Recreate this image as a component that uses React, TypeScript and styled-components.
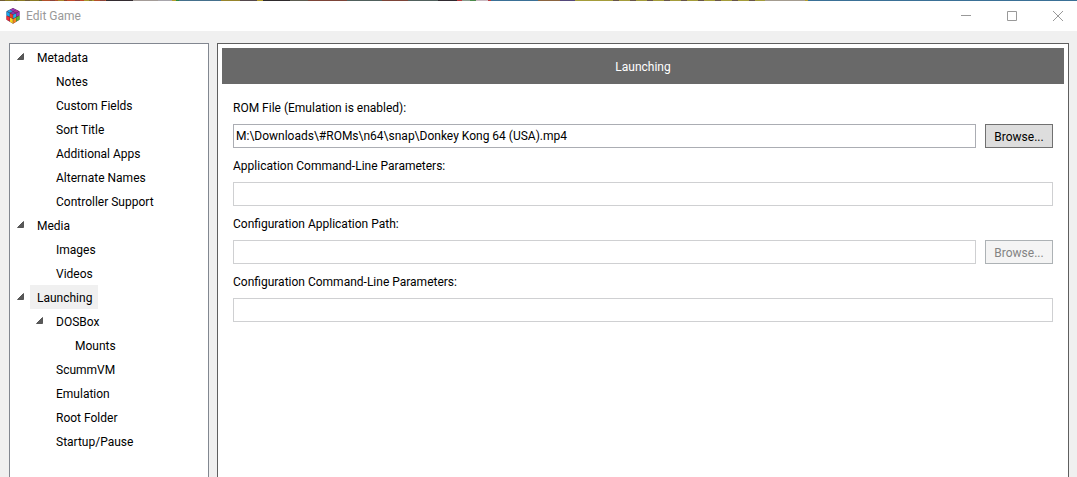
import React from "react";
import styled, { createGlobalStyle } from "styled-components";

const GlobalStyle = createGlobalStyle`
  *, *::before, *::after { box-sizing: border-box; }
  body {
    margin: 0;
    background: #f0f0f0;
    color: #000;
    font: 12px/16px "Segoe UI", Roboto, "Open Sans", sans-serif;
  }
`;

const Window = styled.div`
  display: flex;
  flex-direction: column;
  min-height: 100vh;
`;

const Backdrop = styled.div`
  height: 1px;
  background:
    repeating-linear-gradient(90deg, #4a305066 0 5px, transparent 5px 14px, #2e2a2c55 14px 17px, transparent 17px 25px) 0 0 / 106px 1px no-repeat,
    repeating-linear-gradient(90deg, #4a3050aa 0 6px, transparent 6px 17px) 613px 0 / 152px 1px no-repeat,
    linear-gradient(
      90deg,
      #8a7a24 0 42px, #b4502a 42px 58px, #a8862a 58px 64px, #c04a28 64px 84px,
      #a8962e 84px 94px, #b4502a 94px 106px,
      #332b30 106px 133px, #a49c98 133px 158px, #a8a6ac 158px 172px,
      #b49c2c 172px 176px, #2a8a3a 176px 179px, #45708c 179px 221px,
      #96842c 221px 240px, #54484c 240px 257px, #b49c2c 257px 263px,
      #2e2a2c 263px 290px, #5c5c50 290px 308px, #7c4438 308px 347px,
      #50605c 347px 382px, #7c4438 382px 408px, #50605c 408px 438px,
      #302a30 438px 457px, #b8383c 457px 462px, #8a9a8c 462px 470px,
      #4a8a4a 470px 476px, #c8b8c0 476px 488px, #b8383c 488px 491px,
      #3a7096 491px 538px, #8a6440 538px 560px, #54487a 560px 575px,
      #a49c3a 575px 765px, #a49c90 765px 805px, #b49c2c 805px 808px,
      #3a7096 808px
    );
`;

const TitleBar = styled.header`
  display: flex;
  align-items: center;
  height: 30px;
  padding: 0 1px 0 5px;
  background: #fff;
`;

const Title = styled.h1`
  flex: 1;
  margin: 0 0 0 5px;
  color: #999;
  font-size: 12px;
  font-weight: 400;
`;

const WindowControls = styled.div`
  display: flex;
  gap: 10px;
`;

const WindowButton = styled.button`
  display: flex;
  align-items: center;
  justify-content: center;
  width: 36px;
  height: 28px;
  padding: 0;
  border: 0;
  background: none;
  color: #999;
`;

const Body = styled.div`
  display: flex;
  flex: 1;
  gap: 8px;
  padding: 12px 8px 0 9px;
`;

const Sidebar = styled.nav`
  flex: 0 0 200px;
  padding: 1px 0;
  border: 1px solid #828790;
  border-bottom: 0;
  background: #fff;
`;

const TreeList = styled.ul<{ $nested?: boolean }>`
  margin: 0;
  padding: 0 0 0 ${(p) => (p.$nested ? 19 : 1)}px;
  list-style: none;
`;

const TreeRow = styled.div`
  display: flex;
  align-items: center;
  height: 24px;
`;

const Toggle = styled.button`
  display: flex;
  align-items: center;
  justify-content: center;
  width: 19px;
  height: 24px;
  padding: 0 0 2px;
  border: 0;
  background: none;
`;

const ToggleSpace = styled.span`
  width: 19px;
`;

const TreeLink = styled.a<{ $selected?: boolean }>`
  padding: 5px 6px 3px 7px;
  background: ${(p) => (p.$selected ? "#f0f0f0" : "transparent")};
  color: inherit;
  text-decoration: none;
`;

const Panel = styled.main`
  flex: 1;
  min-width: 0;
  padding: 4px;
  border: 1px solid #5f5f5f;
  border-bottom: 0;
  background: #fff;
`;

const PanelTitle = styled.h2`
  margin: 0;
  padding: 11px 10px 9px;
  background: #696969;
  color: #fff;
  font-size: 12px;
  font-weight: 400;
  text-align: center;
`;

const Form = styled.form`
  display: flex;
  flex-direction: column;
  gap: 10px;
  padding: 16px 11px;
`;

const Field = styled.div`
  display: flex;
  flex-direction: column;
  gap: 8px;
`;

const FieldRow = styled.div`
  display: flex;
  gap: 9px;
`;

const TextBox = styled.input`
  flex: 1;
  min-width: 0;
  height: 24px;
  padding: 0 2px;
  border: 1px solid #abadb3;
  background: #fff;
  color: #000;
  font: inherit;
  &:disabled { border-color: #cfd0d2; }
`;

const BrowseButton = styled.button`
  width: 68px;
  height: 24px;
  padding: 1px 0 0;
  border: 1px solid #707070;
  background: #ddd;
  color: #000;
  font: inherit;
  &:disabled {
    border-color: #adb2b5;
    background: #f4f4f4;
    color: #838383;
  }
`;

interface Node {
  label: string;
  selected?: boolean;
  children?: Node[];
}

const tree: Node[] = [
  {
    label: "Metadata",
    children: [
      { label: "Notes" },
      { label: "Custom Fields" },
      { label: "Sort Title" },
      { label: "Additional Apps" },
      { label: "Alternate Names" },
      { label: "Controller Support" },
    ],
  },
  { label: "Media", children: [{ label: "Images" }, { label: "Videos" }] },
  {
    label: "Launching",
    selected: true,
    children: [
      { label: "DOSBox", children: [{ label: "Mounts" }] },
      { label: "ScummVM" },
      { label: "Emulation" },
      { label: "Root Folder" },
      { label: "Startup/Pause" },
    ],
  },
];

const fields = [
  {
    id: "rom",
    label: "ROM File (Emulation is enabled):",
    value: "M:\\Downloads\\#ROMs\\n64\\snap\\Donkey Kong 64 (USA).mp4",
    browse: true,
    enabled: true,
  },
  { id: "app-params", label: "Application Command-Line Parameters:" },
  { id: "config-path", label: "Configuration Application Path:", browse: true },
  { id: "config-params", label: "Configuration Command-Line Parameters:" },
];

function Tree({ nodes, nested }: { nodes: Node[]; nested?: boolean }) {
  return (
    <TreeList $nested={nested}>
      {nodes.map((node) => (
        <li key={node.label}>
          <TreeRow>
            {node.children ? (
              <Toggle type="button" aria-label={`Collapse ${node.label}`} aria-expanded>
                <svg width="7" height="7" viewBox="0 0 7 7">
                  <path d="M6.5 0.5V6.5H0.5Z" fill="#595959" stroke="#404040" strokeWidth="0.8" />
                </svg>
              </Toggle>
            ) : (
              <ToggleSpace />
            )}
            <TreeLink href="#" $selected={node.selected}>{node.label}</TreeLink>
          </TreeRow>
          {node.children && <Tree nodes={node.children} nested />}
        </li>
      ))}
    </TreeList>
  );
}

function CubeLogo() {
  return (
    <svg width="16" height="18" viewBox="0 0 16 18" aria-hidden="true">
      <path d="M8 1L14.500 4.200V12.800L8 16.800L1.500 12.800V4.200Z" fill="#4a3040" />
      <path d="M8 1.200L11 2.700L8 4.200L5 2.700Z" fill="#9a38b8" />
      <path d="M4.800 2.800L7.800 4.300L5 5.700L2 4.200Z" fill="#28a0e8" />
      <path d="M11.200 2.800L14 4.200L11 5.700L8.200 4.300Z" fill="#b02c98" />
      <path d="M8 4.500L10.800 5.900L8 7.400L5.200 5.900Z" fill="#8a30b0" />
      <path d="M1.500 4.600L4.700 6.200V9.800L1.500 8.200Z" fill="#18a8f0" />
      <path d="M5 6.400L7.800 7.800V11.400L5 9.900Z" fill="#f03c28" />
      <path d="M1.500 8.700L4.700 10.300V14.500L1.500 12.600Z" fill="#f02c38" />
      <path d="M5 10.500L7.800 11.900V16.400L5 14.700Z" fill="#f8d820" />
      <path d="M8.200 7.800L11 6.400V9.900L8.200 11.400Z" fill="#20b0e8" />
      <path d="M11.300 6.200L14.500 4.600V8.200L11.300 9.800Z" fill="#9c30b8" />
      <path d="M8.200 11.900L11 10.500V14.700L8.200 16.400Z" fill="#f88820" />
      <path d="M11.300 10.300L14.500 8.700V12.600L11.300 14.500Z" fill="#58b830" />
    </svg>
  );
}

export default function App() {
  return (
    <Window>
      <GlobalStyle />
      <Backdrop />
      <TitleBar>
        <CubeLogo />
        <Title>Edit Game</Title>
        <WindowControls>
          <WindowButton type="button" aria-label="Minimize">
            <svg width="10" height="10"><path d="M0 4.500H10" stroke="currentColor" /></svg>
          </WindowButton>
          <WindowButton type="button" aria-label="Maximize">
            <svg width="10" height="10"><path d="M.5.5H9.500V9.500H.5Z" fill="none" stroke="currentColor" /></svg>
          </WindowButton>
          <WindowButton type="button" aria-label="Close">
            <svg width="10" height="10"><path d="M0 0L10 10M10 0L0 10" stroke="currentColor" /></svg>
          </WindowButton>
        </WindowControls>
      </TitleBar>
      <Body>
        <Sidebar aria-label="Sections">
          <Tree nodes={tree} />
        </Sidebar>
        <Panel>
          <PanelTitle>Launching</PanelTitle>
          <Form>
            {fields.map((f) => (
              <Field key={f.id}>
                <label htmlFor={f.id}>{f.label}</label>
                <FieldRow>
                  <TextBox id={f.id} type="text" defaultValue={f.value} disabled={!f.enabled} />
                  {f.browse && (
                    <BrowseButton type="button" disabled={!f.enabled}>Browse...</BrowseButton>
                  )}
                </FieldRow>
              </Field>
            ))}
          </Form>
        </Panel>
      </Body>
    </Window>
  );
}
